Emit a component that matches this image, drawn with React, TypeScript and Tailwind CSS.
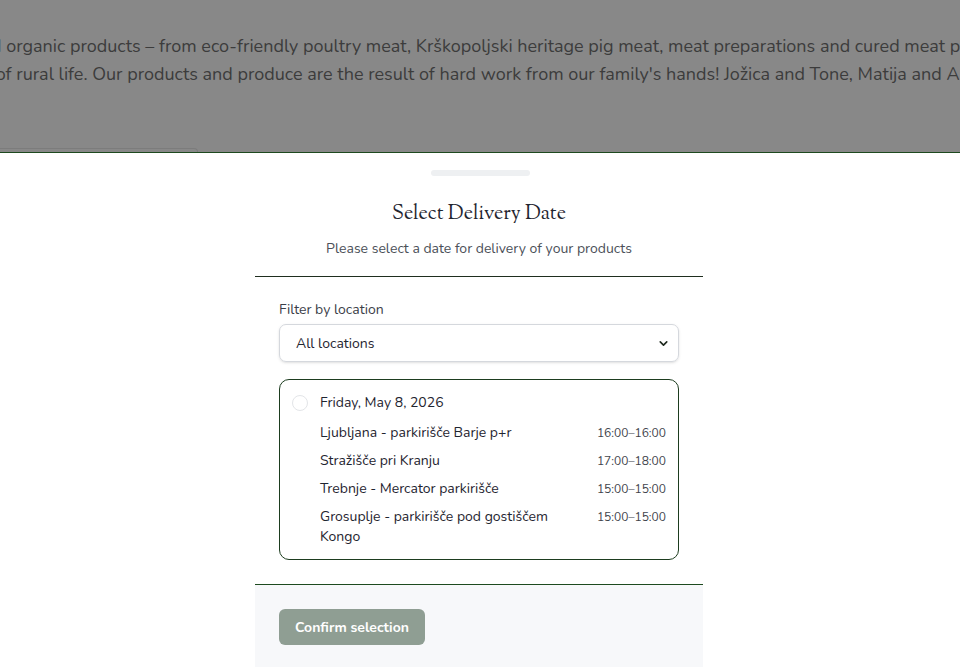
import { ChevronDown } from "lucide-react";

const stops = [
  { place: "Ljubljana - parkirišče Barje p+r", time: "16:00–16:00" },
  { place: "Stražišče pri Kranju", time: "17:00–18:00" },
  { place: "Trebnje - Mercator parkirišče", time: "15:00–15:00" },
  { place: "Grosuplje - parkirišče pod gostiščem Kongo", time: "15:00–15:00" },
];

const sans = "font-['Nunito','Open_Sans','Liberation_Sans',sans-serif]";

export default function App() {
  return (
    <div className={`h-[667px] flex flex-col overflow-hidden bg-white ${sans}`}>
      {/* Page behind the backdrop */}
      <div className="relative h-[152px] shrink-0 bg-[#888888] overflow-hidden">
        <div className="pt-[32px] -ml-[9px] text-[18px] leading-[28px] text-[#3c3c3c] whitespace-nowrap">
          <p>d organic products – from eco-friendly poultry meat, Krškopoljski heritage pig meat, meat preparations and cured meat products</p>
          <p>&nbsp;of rural life. Our products and produce are the result of hard work from our family's hands! Jožica and Tone, Matija and Ana</p>
        </div>
        <div className="absolute left-0 bottom-0 w-[198px] h-[4px] border-t border-r border-[#7c7c7c] rounded-tr-[6px]" />
      </div>

      {/* Bottom sheet */}
      <div className="flex-1 flex flex-col border-t border-[#1d4a1f] bg-white">
        <div className="mx-auto mt-[17px] w-[99px] h-[6px] rounded-full bg-[#eef0f2]" />

        <div className="ml-[255px] w-[448px] flex-1 flex flex-col">
          <div className="text-center border-b border-[#1f2e1f] pb-[17px]">
            <h2 className="mt-[25px] text-[20px] leading-[28px] text-[#1f2530] font-['Sorts_Mill_Goudy','Liberation_Serif',serif]">
              Select Delivery Date
            </h2>
            <p className="mt-[10px] text-[14px] leading-[20px] text-[#4b5058]">
              Please select a date for delivery of your products
            </p>
          </div>

          <div className="px-6 pt-[23px] pb-6">
            <label className="block text-[14px] leading-[20px] text-[#3b4048]">Filter by location</label>
            <div className="mt-[4px] h-[38px] flex items-center justify-between rounded-[7px] border border-[#d5d8dd] shadow-sm pl-[16px] pr-[8px] text-[14px] text-[#1f2530]">
              <span>All locations</span>
              <ChevronDown className="w-[13px] h-[13px] text-[#1f2a1f]" strokeWidth={3} />
            </div>

            <div className="mt-[17px] rounded-[10px] border border-[#1d3d1f] pt-[13px] pb-[12px] px-[12px]">
              <div className="flex items-center gap-[12px]">
                <span className="w-[16px] h-[16px] rounded-full border border-[#e3e5e8] bg-white shrink-0" />
                <span className="text-[14px] leading-[20px] text-[#1f2530]">Friday, May 8, 2026</span>
              </div>
              <div className="mt-[10px] pl-[28px] flex flex-col gap-[8px]">
                {stops.map(({ place, time }) => (
                  <div key={place} className="flex items-start justify-between gap-4">
                    <span className="text-[14px] leading-[20px] text-[#1f2530] max-w-[250px]">{place}</span>
                    <span className="text-[12px] leading-[20px] text-[#3f444c] shrink-0">{time}</span>
                  </div>
                ))}
              </div>
            </div>
          </div>

          <div className="flex-1 border-t border-[#1d4a1f] bg-[#f7f8fa] px-6 pt-[24px]">
            <button className="h-[36px] w-[146px] rounded-[6px] bg-[#8f9e93] text-white text-[14px] font-bold">
              Confirm selection
            </button>
          </div>
        </div>
      </div>
    </div>
  );
}
